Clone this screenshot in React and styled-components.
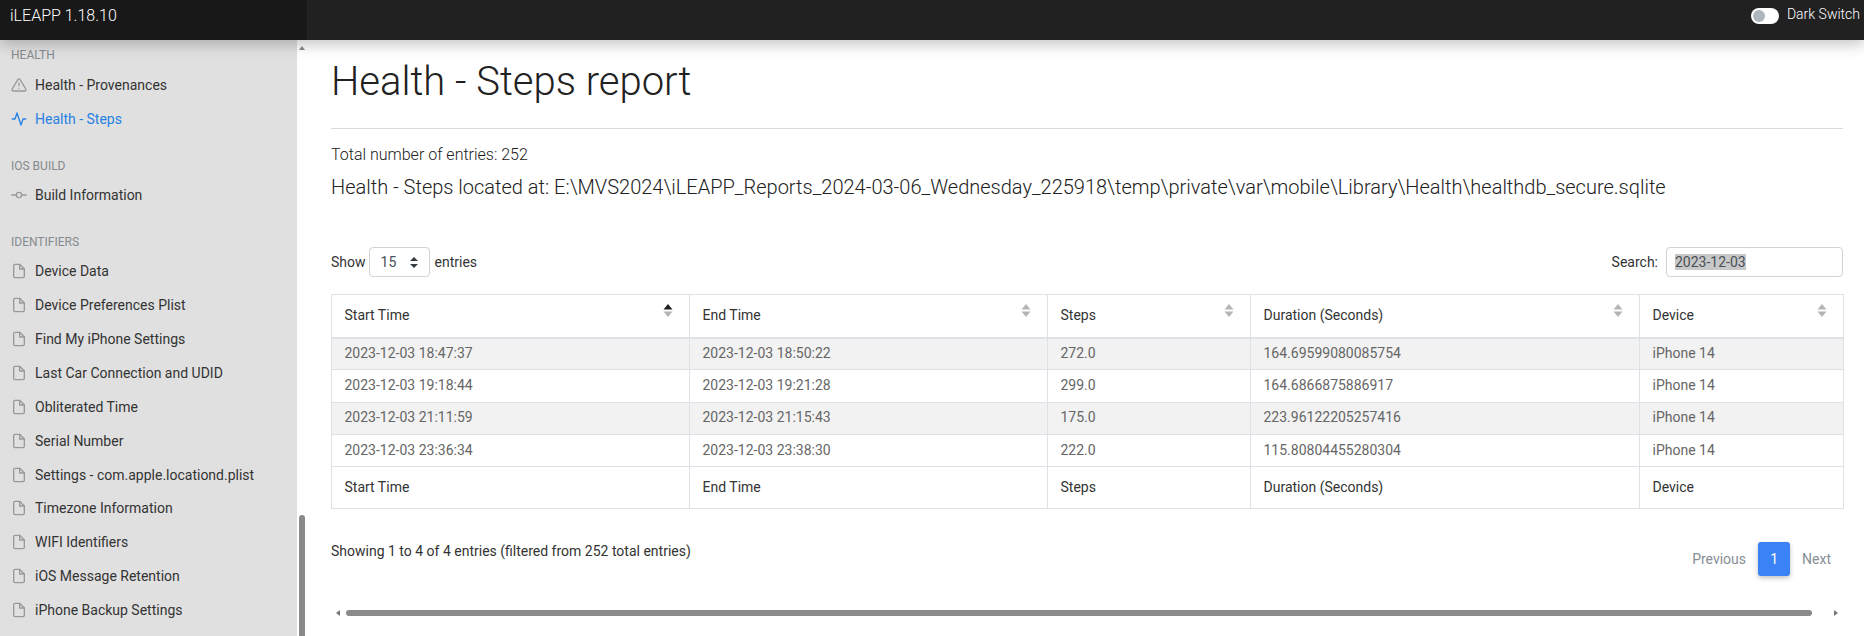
import React from "react";
import styled, { createGlobalStyle } from "styled-components";

const GlobalStyle = createGlobalStyle`
  html, body {
    margin: 0;
    height: 100%;
    overflow: hidden;
    background: #fff;
    font-family: Roboto, "Liberation Sans", sans-serif;
  }
  * { box-sizing: border-box; }
`;

const Page = styled.div`
  width: 1864px;
  height: 636px;
  display: flex;
  flex-direction: column;
  overflow: hidden;
`;

const Navbar = styled.header`
  position: relative;
  z-index: 2;
  flex: 0 0 40px;
  display: flex;
  justify-content: space-between;
  background: #212121;
  box-shadow: 0 5px 14px rgba(0, 0, 0, 0.22);
  color: #fff;
`;

const Brand = styled.div`
  width: 307px;
  padding: 6px 0 0 10px;
  background: #181818;
  font-size: 16px;
  font-weight: 300;
  line-height: 19px;
  color: #fff;
`;

const DarkSwitch = styled.div`
  display: flex;
  align-items: flex-start;
  gap: 8px;
  padding: 5px 4px 0 0;
  font-size: 14px;
  font-weight: 300;
  line-height: 18px;
  color: #fff;
`;

const Toggle = styled.span`
  width: 28px;
  height: 16px;
  margin-top: 3px;
  padding: 2px;
  border-radius: 8px;
  background: #fff;
  &::before {
    content: "";
    display: block;
    width: 12px;
    height: 12px;
    border-radius: 50%;
    background: #adb5bd;
  }
`;

const Body = styled.div`
  flex: 1;
  min-height: 0;
  display: flex;
`;

const Sidebar = styled.nav`
  flex: 0 0 297px;
  padding: 8px 0 0 11px;
  background: #e0e0e0;
  overflow: hidden;
`;

const SectionTitle = styled.div`
  height: 14px;
  margin-top: ${(p) => p.$top}px;
  margin-bottom: ${(p) => p.$bottom}px;
  font-size: 12px;
  line-height: 14px;
  color: #858a8e;
  text-transform: uppercase;
`;

const NavItem = styled.div`
  display: flex;
  align-items: center;
  gap: 8px;
  height: 33.85px;
  font-size: 14px;
  color: ${(p) => (p.$active ? "#2780e3" : "#333")};
  svg {
    flex: 0 0 16px;
    color: ${(p) => (p.$active ? "#2780e3" : "#999")};
  }
`;

const VerticalScrollbar = styled.div`
  flex: 0 0 10px;
  display: flex;
  flex-direction: column;
  justify-content: space-between;
  align-items: center;
`;

const ArrowUp = styled.span`
  margin-top: 6px;
  border-left: 3px solid transparent;
  border-right: 3px solid transparent;
  border-bottom: 4px solid #8a8a8a;
`;

const VerticalThumb = styled.span`
  width: 6px;
  height: 121px;
  border-radius: 3px 3px 0 0;
  background: #8a8a8a;
`;

const Main = styled.main`
  flex: 1;
  min-width: 0;
  padding: 0 21px 0 24px;
`;

const Title = styled.h1`
  margin: 18px 0 0;
  font-size: 40px;
  font-weight: 300;
  line-height: 48px;
  color: #212121;
`;

const Rule = styled.hr`
  margin: 22px 0 0;
  border: 0;
  border-top: 1px solid #dcdcdc;
`;

const TotalLine = styled.div`
  margin-top: 16px;
  font-size: 16px;
  font-weight: 300;
  line-height: 19px;
  color: #212121;
`;

const Location = styled.h5`
  margin: 11px 0 0;
  font-size: 20px;
  font-weight: 300;
  line-height: 24px;
  color: #212121;
`;

const Controls = styled.div`
  display: flex;
  justify-content: space-between;
  align-items: center;
  height: 30px;
  margin-top: 48px;
  font-size: 14px;
  color: #333;
`;

const ControlGroup = styled.label`
  display: flex;
  align-items: center;
  gap: ${(p) => p.$gap}px;
`;

const SelectBox = styled.span`
  width: 61px;
  height: 30px;
  display: flex;
  align-items: center;
  justify-content: space-between;
  margin-right: 2px;
  padding: 0 11px 0 11px;
  border: 1px solid #ced4da;
  border-radius: 4px;
  color: #495057;
`;

const SearchBox = styled.span`
  width: 177px;
  height: 30px;
  display: flex;
  align-items: center;
  padding: 0 8px;
  border: 1px solid #ced4da;
  border-radius: 4px;
  color: #495057;
  mark {
    background: #c8c8c8;
    color: inherit;
  }
`;

const Table = styled.table`
  width: 1512px;
  margin-top: 17px;
  border-collapse: collapse;
  table-layout: fixed;
  font-size: 14px;
`;

const HeadCell = styled.th`
  position: relative;
  height: ${(p) => p.$height}px;
  padding: 0 12px 2px 12.5px;
  border: 1px solid #dee2e6;
  border-bottom-width: ${(p) => p.$bottom}px;
  font-weight: 400;
  text-align: left;
  color: #333;
  svg {
    position: absolute;
    top: 9px;
    right: 16px;
  }
`;

const Row = styled.tr`
  background: ${(p) => (p.$odd ? "#f2f2f2" : "#fff")};
`;

const Cell = styled.td`
  height: 32.3px;
  padding: 0 12px 2px 12.5px;
  border: 1px solid #dee2e6;
  color: #666;
`;

const Footer = styled.div`
  display: flex;
  justify-content: space-between;
  align-items: flex-start;
  margin-top: 33px;
  height: 67px;
`;

const Info = styled.div`
  margin-top: 1px;
  font-size: 14px;
  line-height: 17px;
  color: #333;
`;

const Pager = styled.div`
  display: flex;
  align-items: center;
  height: 34px;
  font-size: 14px;
  color: #868e96;
`;

const PageLink = styled.span`
  padding: 0 12px;
`;

const PageCurrent = styled.span`
  width: 32px;
  height: 34px;
  display: flex;
  align-items: center;
  justify-content: center;
  border-radius: 3px;
  background: #3b82f6;
  box-shadow: 0 2px 5px rgba(0, 0, 0, 0.25);
  color: #fff;
`;

const HorizontalScrollbar = styled.div`
  display: flex;
  align-items: center;
  gap: 6px;
  height: 8px;
  padding: 0 5px 0 5px;
`;

const ArrowSide = styled.span`
  border-top: 3px solid transparent;
  border-bottom: 3px solid transparent;
  ${(p) =>
    p.$right
      ? "border-left: 4px solid #777; margin-left: 16px;"
      : "border-right: 4px solid #777;"}
`;

const HorizontalThumb = styled.span`
  flex: 1;
  height: 6px;
  border-radius: 3px;
  background: #8a8a8a;
`;

const ICONS = {
  alert: (
    <>
      <path d="M10.29 3.86L1.82 18a2 2 0 0 0 1.71 3h16.94a2 2 0 0 0 1.71-3L13.71 3.86a2 2 0 0 0-3.42 0z" />
      <line x1="12" y1="9" x2="12" y2="13" />
      <line x1="12" y1="17" x2="12.01" y2="17" />
    </>
  ),
  activity: <polyline points="22 12 18 12 15 21 9 3 6 12 2 12" />,
  commit: (
    <>
      <circle cx="12" cy="12" r="4" />
      <line x1="1.05" y1="12" x2="7" y2="12" />
      <line x1="17.01" y1="12" x2="22.96" y2="12" />
    </>
  ),
  file: (
    <>
      <path d="M13 2H6a2 2 0 0 0-2 2v16a2 2 0 0 0 2 2h12a2 2 0 0 0 2-2V9z" />
      <polyline points="13 2 13 9 20 9" />
    </>
  ),
};

function Icon({ name }) {
  return (
    <svg
      width="16"
      height="16"
      viewBox="0 0 24 24"
      fill="none"
      stroke="currentColor"
      strokeWidth="2"
      strokeLinecap="round"
      strokeLinejoin="round"
    >
      {ICONS[name]}
    </svg>
  );
}

function SortArrows({ active }) {
  return (
    <svg width="10" height="13" viewBox="0 0 10 13">
      <path d="M5 0L9.5 5.5H0.5Z" fill={active ? "#212121" : "#b5b5b5"} />
      <path d="M0.5 7.5H9.5L5 13Z" fill="#b5b5b5" />
    </svg>
  );
}

function SelectArrows() {
  return (
    <svg width="8" height="11" viewBox="0 0 8 11">
      <path d="M4 0L8 4H0Z M0 7H8L4 11Z" fill="#343a40" />
    </svg>
  );
}

const SECTIONS = [
  {
    title: "Health",
    top: 0,
    bottom: 6,
    items: [
      { label: "Health - Provenances", icon: "alert" },
      { label: "Health - Steps", icon: "activity", active: true },
    ],
  },
  {
    title: "iOS Build",
    top: 23,
    bottom: 5,
    items: [{ label: "Build Information", icon: "commit" }],
  },
  {
    title: "Identifiers",
    top: 23,
    bottom: 6,
    items: [
      "Device Data",
      "Device Preferences Plist",
      "Find My iPhone Settings",
      "Last Car Connection and UDID",
      "Obliterated Time",
      "Serial Number",
      "Settings - com.apple.locationd.plist",
      "Timezone Information",
      "WIFI Identifiers",
      "iOS Message Retention",
      "iPhone Backup Settings",
    ].map((label) => ({ label, icon: "file" })),
  },
];

const COLUMNS = [
  { name: "Start Time", width: 358 },
  { name: "End Time", width: 358 },
  { name: "Steps", width: 203 },
  { name: "Duration (Seconds)", width: 389 },
  { name: "Device", width: 204 },
];

const ROWS = [
  ["2023-12-03 18:47:37", "2023-12-03 18:50:22", "272.0", "164.69599080085754", "iPhone 14"],
  ["2023-12-03 19:18:44", "2023-12-03 19:21:28", "299.0", "164.6866875886917", "iPhone 14"],
  ["2023-12-03 21:11:59", "2023-12-03 21:15:43", "175.0", "223.96122205257416", "iPhone 14"],
  ["2023-12-03 23:36:34", "2023-12-03 23:38:30", "222.0", "115.80804455280304", "iPhone 14"],
];

export default function App() {
  return (
    <Page>
      <GlobalStyle />
      <Navbar>
        <Brand>iLEAPP 1.18.10</Brand>
        <DarkSwitch>
          <Toggle />
          Dark Switch
        </DarkSwitch>
      </Navbar>
      <Body>
        <Sidebar>
          {SECTIONS.map((section) => (
            <div key={section.title}>
              <SectionTitle $top={section.top} $bottom={section.bottom}>
                {section.title}
              </SectionTitle>
              {section.items.map((item) => (
                <NavItem key={item.label} $active={item.active}>
                  <Icon name={item.icon} />
                  {item.label}
                </NavItem>
              ))}
            </div>
          ))}
        </Sidebar>
        <VerticalScrollbar>
          <ArrowUp />
          <VerticalThumb />
        </VerticalScrollbar>
        <Main>
          <Title>Health - Steps report</Title>
          <Rule />
          <TotalLine>Total number of entries: 252</TotalLine>
          <Location>
            Health - Steps located at:
            E:\MVS2024\iLEAPP_Reports_2024-03-06_Wednesday_225918\temp\private\var\mobile\Library\Health\healthdb_secure.sqlite
          </Location>
          <Controls>
            <ControlGroup $gap={3}>
              Show
              <SelectBox>
                15
                <SelectArrows />
              </SelectBox>
              entries
            </ControlGroup>
            <ControlGroup $gap={8}>
              Search:
              <SearchBox>
                <mark>2023-12-03</mark>
              </SearchBox>
            </ControlGroup>
          </Controls>
          <Table>
            <colgroup>
              {COLUMNS.map((col) => (
                <col key={col.name} width={col.width} />
              ))}
            </colgroup>
            <thead>
              <tr>
                {COLUMNS.map((col, i) => (
                  <HeadCell key={col.name} $height={43} $bottom={2}>
                    {col.name}
                    <SortArrows active={i === 0} />
                  </HeadCell>
                ))}
              </tr>
            </thead>
            <tbody>
              {ROWS.map((row, r) => (
                <Row key={row[0]} $odd={r % 2 === 0}>
                  {row.map((value, c) => (
                    <Cell key={c}>{value}</Cell>
                  ))}
                </Row>
              ))}
            </tbody>
            <tfoot>
              <tr>
                {COLUMNS.map((col) => (
                  <HeadCell key={col.name} $height={42} $bottom={1}>
                    {col.name}
                  </HeadCell>
                ))}
              </tr>
            </tfoot>
          </Table>
          <Footer>
            <Info>Showing 1 to 4 of 4 entries (filtered from 252 total entries)</Info>
            <Pager>
              <PageLink>Previous</PageLink>
              <PageCurrent>1</PageCurrent>
              <PageLink>Next</PageLink>
            </Pager>
          </Footer>
          <HorizontalScrollbar>
            <ArrowSide />
            <HorizontalThumb />
            <ArrowSide $right />
          </HorizontalScrollbar>
        </Main>
      </Body>
    </Page>
  );
}
